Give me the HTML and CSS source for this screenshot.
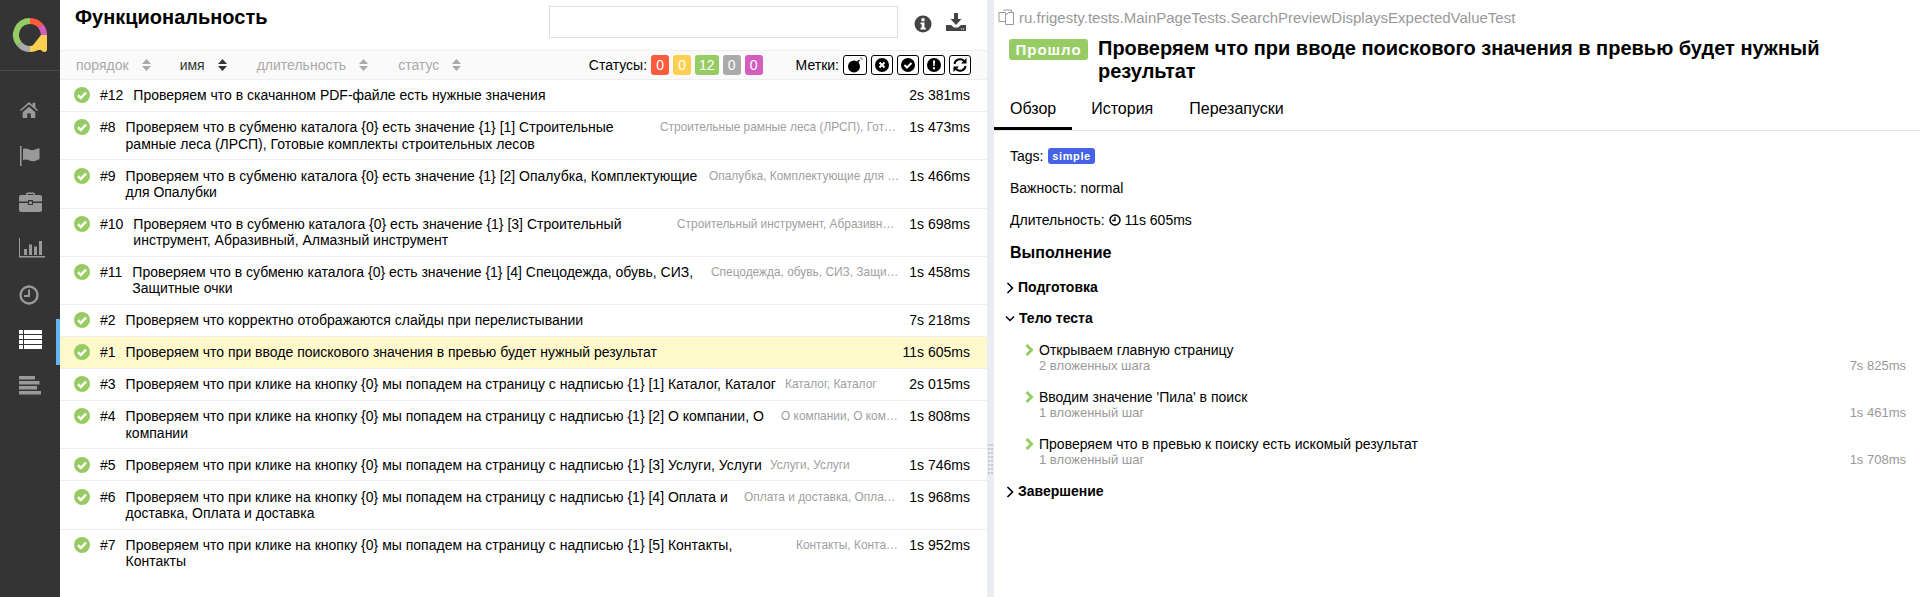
FILE: index.html
```html
<!DOCTYPE html>
<html lang="ru">
<head>
  <meta charset="UTF-8" />
  <title>Allure Report</title>
  <link rel="stylesheet" href="styles.css">
</head>
<body>

<svg class="defs" width="0" height="0">
  <symbol id="ok" viewBox="0 0 16 16">
    <circle cx="8" cy="8" r="8" fill="#97cc64"/>
    <path d="M4 8.2l2.8 2.8 5.2-5.4" fill="none" stroke="#fff" stroke-width="2.5"/>
  </symbol>
  <symbol id="sort" viewBox="0 0 9 12">
    <path d="M4.5 0L9 5H0z M0 7h9L4.5 12z"/>
  </symbol>
  <symbol id="step" viewBox="0 0 9 12">
    <path d="M1.5 1l5 5-5 5" fill="none" stroke="#97cc64" stroke-width="3"/>
  </symbol>
  <symbol id="closed" viewBox="0 0 8 12">
    <path d="M1.5 1l5 5-5 5" fill="none" stroke="#000" stroke-width="1.6"/>
  </symbol>
</svg>

<div class="app">

  <nav class="sidebar">
    <div class="logo">
      <svg width="60" height="70" viewBox="0 0 60 70" fill="none" stroke-width="6">
        <path d="M30 21A14 14 0 0 1 40.7 26" stroke="#fd5a3e"/>
        <path d="M40.7 26A14 14 0 0 1 44 35" stroke="#d35ebe"/>
        <path d="M44 35A14 14 0 0 1 30 49" stroke="#ffd050"/>
        <path d="M41 35h6v14q0 3-2.500 3q-2.500 0-3.500-2h-11v-1z" fill="#ffd050" stroke="none"/>
        <path d="M30 49A14 14 0 0 1 19.300 44" stroke="#aaa"/>
        <path d="M19.300 44A14 14 0 0 1 30 21" stroke="#97cc64"/>
      </svg>
    </div>
    <ul class="menu">
      <li>
        <svg width="20" height="18" viewBox="0 0 22 20"><path d="M11 1L1 10l1 1.200L11 3.500l9 7.700 1-1.200-3-2.700V2h-3v2.700zM4 12.500L11 6.500l7 6V19h-5v-5H9v5H4z"/></svg>
      </li>
      <li>
        <svg width="22" height="20" viewBox="0 0 22 20"><path d="M1 0h1.500v20H1zM4 3c4-2 7 2 10.500 1 2-.5 4-1.300 6-2v11c-2 1-4 2-6 2.200-3.500.3-6.500-3-10.500-1.200z"/></svg>
      </li>
      <li>
        <svg width="23" height="20" viewBox="0 0 23 20"><path d="M7 3V2q0-1.500 1.500-1.500h6Q16 .5 16 2v1h-1.500V2h-6v1zM0 5q0-2 2-2h19q2 0 2 2v4.500H14V8H9v1.500H0zM0 11h9v2h5v-2h9v7q0 2-2 2H2q-2 0-2-2zM10 9.500h3V12h-3z"/></svg>
      </li>
      <li>
        <svg width="26" height="20" viewBox="0 0 26 20"><path d="M0 0h1v18h25v1.500H0zM5 11h3v6H5zM10 6.500h3V17h-3zM15 8.500h3V17h-3zM20 3h3v14h-3z"/></svg>
      </li>
      <li>
        <svg width="20" height="22" viewBox="0 0 20 22"><circle cx="10" cy="12" r="8.500" fill="none" stroke="currentColor" stroke-width="2.400"/><path d="M10 6.500v6.500H5" fill="none" stroke="currentColor" stroke-width="2"/></svg>
      </li>
      <li class="active">
        <svg width="23" height="19" viewBox="0 0 23 19"><path d="M0 0h4v4H0zM5 0h18v4H5zM0 5h4v4H0zM5 5h18v4H5zM0 10h4v4H0zM5 10h18v4H5zM0 15h4v4H0zM5 15h18v4H5z"/></svg>
      </li>
      <li>
        <svg width="23" height="19" viewBox="0 0 23 19"><path d="M0 0h16v3.500H0zM0 5h20.500v3.500H0zM0 10h18v3.500H0zM0 15h22v3.500H0z"/></svg>
      </li>
    </ul>
  </nav>

  <section class="left">
    <header class="left-head">
      <h2 class="left-title">Функциональность</h2>
      <input class="search" type="text">
      <svg class="head-icon" width="18" height="18" viewBox="0 0 18 18"><circle cx="9" cy="9" r="8.500"/><g fill="#fff"><circle cx="9" cy="4.800" r="1.800"/><path d="M6.500 7.500h4v5.200h1.200v1.800h-5.200v-1.800h1.200V9.300H6.500z"/></g></svg>
      <svg class="head-icon head-icon-save" width="20" height="18" viewBox="0 0 20 18"><path d="M8 0h4v6h3.500L10 12 4.500 6H8zM0 12h5l3 2.500h4l3-2.500h5v6H0z"/><path d="M15 15.500h1.200v1H15zM17 15.500h1.200v1H17z" fill="#fff"/></svg>
    </header>

    <div class="toolbar">
      <div class="sorter">порядок<svg class="sort-icon" width="9" height="12"><use href="#sort"/></svg></div>
      <div class="sorter sorter-on">имя<svg class="sort-icon" width="9" height="12"><use href="#sort"/></svg></div>
      <div class="sorter">длительность<svg class="sort-icon" width="9" height="12"><use href="#sort"/></svg></div>
      <div class="sorter">статус<svg class="sort-icon" width="9" height="12"><use href="#sort"/></svg></div>

      <div class="filters">
        <span>Статусы:</span>
        <span class="pill pill-failed">0</span>
        <span class="pill pill-broken">0</span>
        <span class="pill pill-passed">12</span>
        <span class="pill pill-skipped">0</span>
        <span class="pill pill-unknown">0</span>
      </div>
      <div class="marks">
        <span class="marks-label">Метки:</span>
        <span class="mark"><svg width="16" height="16" viewBox="0 0 16 16"><circle cx="7" cy="9.500" r="6"/><path d="M10.500 5l2-2" stroke="#000" stroke-width="1.500"/><path d="M13 1h2v2" fill="none" stroke="#888" stroke-width="1"/></svg></span>
        <span class="mark"><svg width="14" height="14" viewBox="0 0 14 14"><circle cx="7" cy="7" r="7"/><path d="M4.500 4.500l5 5M9.500 4.500l-5 5" stroke="#fff" stroke-width="2"/></svg></span>
        <span class="mark"><svg width="14" height="14" viewBox="0 0 14 14"><circle cx="7" cy="7" r="7"/><path d="M3.500 7l2.500 2.500 4.500-4.500" fill="none" stroke="#fff" stroke-width="2"/></svg></span>
        <span class="mark"><svg width="14" height="14" viewBox="0 0 14 14"><circle cx="7" cy="7" r="7"/><path d="M6 2.500h2l-.3 5.500H6.300zM6 9.300h2v2H6z" fill="#fff"/></svg></span>
        <span class="mark"><svg width="14" height="14" viewBox="0 0 14 14"><path d="M1.500 6A5.500 5.500 0 0 1 11 3M12.500 8A5.500 5.500 0 0 1 3 11" fill="none" stroke="#000" stroke-width="2"/><path d="M13.500 0v5.500H8zM.500 14V8.500H6z"/></svg></span>
      </div>
    </div>

    <div class="rows">
      <div class="row">
        <svg class="row-status" width="16" height="16"><use href="#ok"/></svg>
        <span class="row-num">#12</span>
        <span class="row-name">Проверяем что в скачанном PDF-файле есть нужные значения</span>
        <span class="row-time">2s 381ms</span>
      </div>
      <div class="row">
        <svg class="row-status" width="16" height="16"><use href="#ok"/></svg>
        <span class="row-num">#8</span>
        <span class="row-name">Проверяем что в субменю каталога {0} есть значение {1} [1] Строительные рамные леса (ЛРСП), Готовые комплекты строительных лесов</span>
        <span class="row-params" style="width: 240px">Строительные рамные леса (ЛРСП), Готовые комплекты строительных лесов</span>
        <span class="row-time">1s 473ms</span>
      </div>
      <div class="row">
        <svg class="row-status" width="16" height="16"><use href="#ok"/></svg>
        <span class="row-num">#9</span>
        <span class="row-name">Проверяем что в субменю каталога {0} есть значение {1} [2] Опалубка, Комплектующие для Опалубки</span>
        <span class="row-params" style="width: 191px">Опалубка, Комплектующие для Опалубки</span>
        <span class="row-time">1s 466ms</span>
      </div>
      <div class="row">
        <svg class="row-status" width="16" height="16"><use href="#ok"/></svg>
        <span class="row-num">#10</span>
        <span class="row-name">Проверяем что в субменю каталога {0} есть значение {1} [3] Строительный инструмент, Абразивный, Алмазный инструмент</span>
        <span class="row-params" style="width: 223px">Строительный инструмент, Абразивный, Алмазный инструмент</span>
        <span class="row-time">1s 698ms</span>
      </div>
      <div class="row">
        <svg class="row-status" width="16" height="16"><use href="#ok"/></svg>
        <span class="row-num">#11</span>
        <span class="row-name">Проверяем что в субменю каталога {0} есть значение {1} [4] Спецодежда, обувь, СИЗ, Защитные очки</span>
        <span class="row-params" style="width: 189px">Спецодежда, обувь, СИЗ, Защитные очки</span>
        <span class="row-time">1s 458ms</span>
      </div>
      <div class="row">
        <svg class="row-status" width="16" height="16"><use href="#ok"/></svg>
        <span class="row-num">#2</span>
        <span class="row-name">Проверяем что корректно отображаются слайды при перелистывании</span>
        <span class="row-time">7s 218ms</span>
      </div>
      <div class="row row-current">
        <svg class="row-status" width="16" height="16"><use href="#ok"/></svg>
        <span class="row-num">#1</span>
        <span class="row-name">Проверяем что при вводе поискового значения в превью будет нужный результат</span>
        <span class="row-time">11s 605ms</span>
      </div>
      <div class="row">
        <svg class="row-status" width="16" height="16"><use href="#ok"/></svg>
        <span class="row-num">#3</span>
        <span class="row-name">Проверяем что при клике на кнопку {0} мы попадем на страницу с надписью {1} [1] Каталог, Каталог</span>
        <span class="row-params" style="width: 115px">Каталог, Каталог</span>
        <span class="row-time">2s 015ms</span>
      </div>
      <div class="row">
        <svg class="row-status" width="16" height="16"><use href="#ok"/></svg>
        <span class="row-num">#4</span>
        <span class="row-name">Проверяем что при клике на кнопку {0} мы попадем на страницу с надписью {1} [2] О компании, О компании</span>
        <span class="row-params" style="width: 119px">О компании, О компании</span>
        <span class="row-time">1s 808ms</span>
      </div>
      <div class="row">
        <svg class="row-status" width="16" height="16"><use href="#ok"/></svg>
        <span class="row-num">#5</span>
        <span class="row-name">Проверяем что при клике на кнопку {0} мы попадем на страницу с надписью {1} [3] Услуги, Услуги</span>
        <span class="row-params" style="width: 130px">Услуги, Услуги</span>
        <span class="row-time">1s 746ms</span>
      </div>
      <div class="row">
        <svg class="row-status" width="16" height="16"><use href="#ok"/></svg>
        <span class="row-num">#6</span>
        <span class="row-name">Проверяем что при клике на кнопку {0} мы попадем на страницу с надписью {1} [4] Оплата и доставка, Оплата и доставка</span>
        <span class="row-params" style="width: 156px">Оплата и доставка, Оплата и доставка</span>
        <span class="row-time">1s 968ms</span>
      </div>
      <div class="row">
        <svg class="row-status" width="16" height="16"><use href="#ok"/></svg>
        <span class="row-num">#7</span>
        <span class="row-name">Проверяем что при клике на кнопку {0} мы попадем на страницу с надписью {1} [5] Контакты, Контакты</span>
        <span class="row-params" style="width: 104px">Контакты, Контакты</span>
        <span class="row-time">1s 952ms</span>
      </div>
    </div>
  </section>

  <div class="gutter">
    <div class="grip">
      <i></i><i></i><i></i><i></i><i></i><i></i><i></i><i></i>
      <i></i><i></i><i></i><i></i><i></i><i></i><i></i><i></i>
    </div>
  </div>

  <section class="right">
    <div class="path">
      <svg width="17" height="16" viewBox="0 0 17 16" fill="#fff" stroke="#999"><path d="M1 3.500h6.500v9H1zM5.500 1h5l3 0v3"/><path d="M7.500 6.500l3-3h5v12h-8z"/></svg>
      <span>ru.frigesty.tests.MainPageTests.SearchPreviewDisplaysExpectedValueTest</span>
    </div>
    <div class="title-line">
      <span class="status-badge">Прошло</span>
      <h2 class="test-title">Проверяем что при вводе поискового значения в превью будет нужный результат</h2>
    </div>

    <div class="tabs">
      <div class="tab tab-on">Обзор</div>
      <div class="tab">История</div>
      <div class="tab">Перезапуски</div>
    </div>

    <div class="overview">
      <p class="info-line">Tags: <span class="tag">simple</span></p>
      <p class="info-line">Важность: normal</p>
      <p class="info-line">Длительность:
        <svg class="clock" width="12" height="12" viewBox="0 0 12 12" fill="none" stroke="#000"><circle cx="6" cy="6" r="5" stroke-width="1.500"/><path d="M6 2.800v3.700H3.200" stroke-width="1.300"/></svg>
        11s 605ms</p>

      <h3 class="exec-title">Выполнение</h3>

      <div class="stage"><svg width="8" height="12"><use href="#closed"/></svg>Подготовка</div>

      <div class="stage stage-open">
        <svg width="10" height="8" viewBox="0 0 10 8"><path d="M1 1.500l4 4 4-4" fill="none" stroke="#000" stroke-width="1.500"/></svg>Тело теста
      </div>

      <div class="step">
        <svg class="step-icon" width="9" height="12"><use href="#step"/></svg>
        <div class="step-main">
          <div class="step-name">Открываем главную страницу</div>
          <div class="step-sub"><span>2 вложенных шага</span><span>7s 825ms</span></div>
        </div>
      </div>
      <div class="step">
        <svg class="step-icon" width="9" height="12"><use href="#step"/></svg>
        <div class="step-main">
          <div class="step-name">Вводим значение 'Пила' в поиск</div>
          <div class="step-sub"><span>1 вложенный шаг</span><span>1s 461ms</span></div>
        </div>
      </div>
      <div class="step">
        <svg class="step-icon" width="9" height="12"><use href="#step"/></svg>
        <div class="step-main">
          <div class="step-name">Проверяем что в превью к поиску есть искомый результат</div>
          <div class="step-sub"><span>1 вложенный шаг</span><span>1s 708ms</span></div>
        </div>
      </div>

      <div class="stage stage-last"><svg width="8" height="12"><use href="#closed"/></svg>Завершение</div>
    </div>
  </section>

</div>

</body>
</html>
```

FILE: styles.css
```css
html, body {
  margin: 0;
  padding: 0;
  height: 100%;
  overflow: hidden;
}

body {
  font-family: "Liberation Sans", Arial, sans-serif;
  font-size: 14px;
  color: #000;
  background-color: #fff;
}

.defs {
  position: absolute;
}

.app {
  display: flex;
  height: 597px;
}

/* sidebar */

.sidebar {
  width: 60px;
  flex: none;
  background-color: #343434;
}

.logo {
  height: 70px;
  border-bottom: 1px solid #4a4a4a;
}

.logo svg {
  display: block;
}

.menu {
  list-style: none;
  margin: 0;
  padding: 18px 0 0;
}

.menu li {
  height: 46px;
  padding-left: 19px;
  display: flex;
  align-items: center;
  box-sizing: border-box;
  color: #999;
  fill: #999;
}

.menu li svg {
  margin-bottom: 5px;
}

.menu li.active {
  fill: #fff;
  border-right: 4px solid #64b5f6;
}

/* left panel */

.left {
  width: 927px;
  flex: none;
}

.left-head {
  height: 50px;
  display: flex;
  align-items: flex-start;
  box-sizing: border-box;
  padding: 6px 21px 0 15px;
}

.left-title {
  flex: 1;
  margin: 0;
  font-size: 20px;
  line-height: 23px;
}

.search {
  width: 349px;
  height: 32px;
  box-sizing: border-box;
  border: 1px solid #ddd;
  margin: 0 16px 0 0;
  padding: 0;
}

.head-icon {
  fill: #444;
  margin: 9px 0 0;
}

.head-icon-save {
  margin: 7px 0 0 14px;
}

.toolbar {
  height: 30px;
  box-sizing: border-box;
  display: flex;
  align-items: center;
  padding-left: 16px;
  background-color: #fafafa;
  border-top: 1px solid #eee;
  border-bottom: 1px solid #eee;
  color: #aaa;
}

.sorter {
  display: flex;
  align-items: center;
  margin-right: 29px;
}

.sorter + .sorter {
  margin-right: 30px;
}

.sorter-on {
  color: #333;
}

.sort-icon {
  fill: #aaa;
  margin-left: 13px;
}

.sorter-on .sort-icon {
  fill: #333;
}

.filters {
  display: flex;
  align-items: center;
  gap: 4px;
  margin-left: auto;
  color: #000;
}

.pill {
  min-width: 18px;
  height: 20px;
  line-height: 20px;
  text-align: center;
  border-radius: 3px;
  color: #fff;
  box-sizing: border-box;
  padding: 0 4px;
}

.pill-failed { background-color: #fd5a3e; }
.pill-broken { background-color: #ffd050; }
.pill-passed { background-color: #97cc64; }
.pill-skipped { background-color: #aaa; }
.pill-unknown { background-color: #d35ebe; }

.marks {
  display: flex;
  align-items: center;
  gap: 4px;
  margin: 0 16px 0 33px;
  color: #000;
}

.mark {
  width: 22px;
  height: 20px;
  box-sizing: border-box;
  border: 1px solid #000;
  border-radius: 3px;
  background-color: #fff;
  display: flex;
  align-items: center;
  justify-content: center;
}

.marks-label + .mark {
  width: 24px;
}

.row {
  display: flex;
  align-items: flex-start;
  padding: 7.350px 17px 7.350px 14px;
  line-height: 16.300px;
  border-bottom: 1px solid #eee;
}

.row:last-child {
  border-bottom: none;
}

.row-current {
  background-color: #fff9cc;
}

.row-status {
  flex: none;
  margin: 0 10px 0 0;
}

.row-num {
  flex: none;
  margin-right: 10px;
}

.row-name {
  flex: 1;
  min-width: 0;
}

.row-params {
  flex: none;
  font-size: 11.900px;
  color: #a0a0a0;
  white-space: nowrap;
  overflow: hidden;
  text-overflow: ellipsis;
}

.row-time {
  flex: none;
  width: 70px;
  text-align: right;
}

/* splitter */

.gutter {
  width: 7px;
  flex: none;
  background-color: #e9edf1;
  position: relative;
}

.grip {
  position: absolute;
  left: 1px;
  top: 444px;
  display: grid;
  grid-template-columns: 2px 2px;
  gap: 2px 1px;
}

.grip i {
  display: block;
  width: 2px;
  height: 2px;
  background-color: #c4c8cc;
}

/* right panel */

.right {
  flex: 1;
  min-width: 0;
}

.path {
  display: flex;
  align-items: center;
  gap: 4px;
  height: 34px;
  padding-left: 4px;
  color: #999;
  font-size: 15px;
}

.title-line {
  display: flex;
  align-items: flex-start;
  padding-left: 15px;
}

.status-badge {
  flex: none;
  width: 79px;
  height: 21px;
  line-height: 21px;
  margin: 5px 10px 0 0;
  text-align: center;
  background-color: #97cc64;
  color: #fff;
  font-weight: bold;
  font-size: 15px;
  letter-spacing: 1px;
  border-radius: 3px;
}

.test-title {
  margin: 3px 0 0;
  max-width: 800px;
  font-size: 20px;
  line-height: 23px;
}

.tabs {
  display: flex;
  height: 43px;
  margin-top: 5px;
  box-sizing: border-box;
  border-bottom: 1px solid #e5e5e5;
}

.tab {
  padding: 12px 17px 0 16px;
  margin-right: 3px;
  font-size: 16px;
}

.tab-on {
  padding-right: 16px;
  border-bottom: 3px solid #000;
}

.overview {
  padding: 17px 14px 0 16px;
}

.info-line {
  margin: 0 0 16px;
  line-height: 16px;
  height: 16px;
}

.tag {
  display: inline-block;
  height: 16px;
  line-height: 16px;
  padding: 0 4px;
  margin-left: 1px;
  background-color: #4463e6;
  color: #fff;
  font-size: 11px;
  font-weight: bold;
  letter-spacing: 0.6px;
  border-radius: 3px;
  vertical-align: top;
}

.clock {
  vertical-align: -1px;
}

.exec-title {
  margin: 16px 0 0;
  font-size: 16px;
  line-height: 18px;
}

.stage {
  display: flex;
  align-items: center;
  gap: 4px;
  margin: 18px 0 0 -4px;
  font-size: 14px;
  font-weight: bold;
  line-height: 15px;
}

.stage-open {
  margin: 16px 0 0 -5px;
  gap: 4px;
}

.stage-last {
  margin-top: 17px;
}

.step {
  display: flex;
  margin: 16px 0 0 15px;
  height: 31px;
}

.step-icon {
  flex: none;
  margin: 2px 5px 0 0;
}

.step-main {
  flex: 1;
  min-width: 0;
}

.step-name {
  line-height: 16px;
}

.step-sub {
  display: flex;
  justify-content: space-between;
  font-size: 13px;
  line-height: 15px;
  color: #999;
}
```
